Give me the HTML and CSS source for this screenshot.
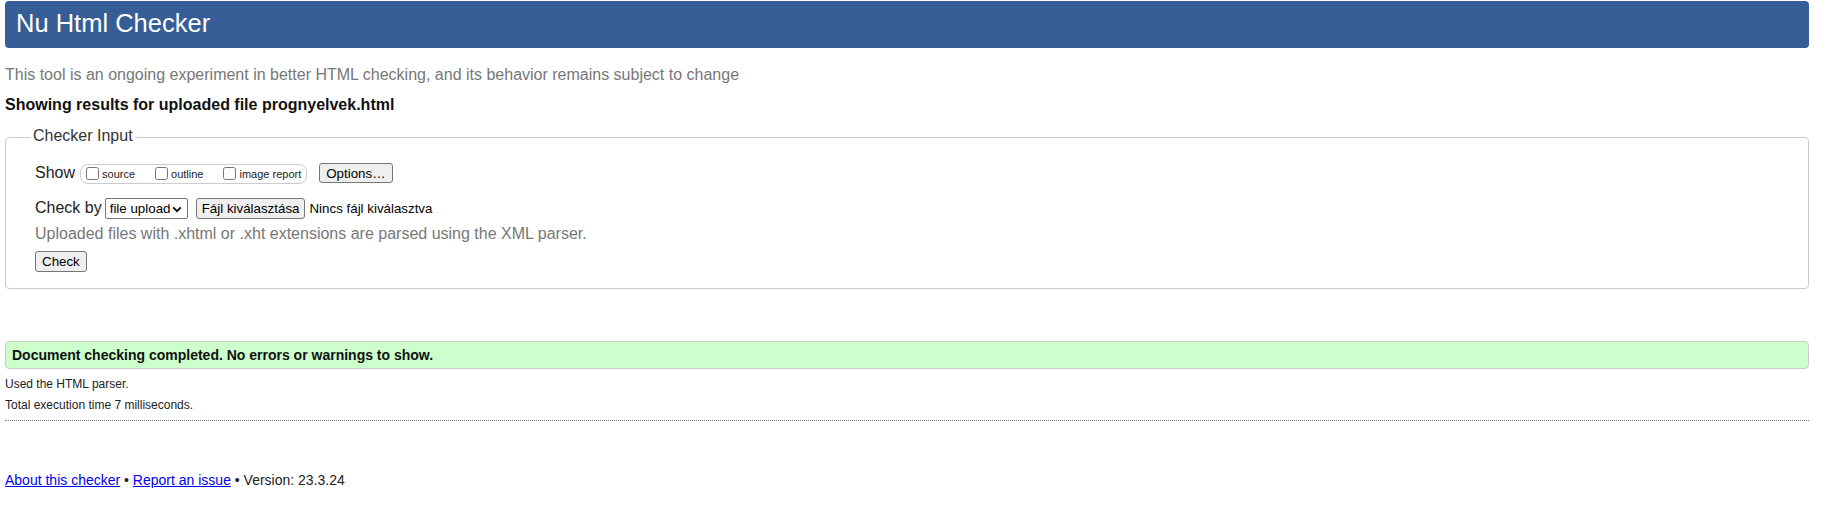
FILE: index.html
```html
<!DOCTYPE html>
<html lang="en">
<head>
<meta charset="utf-8">
<title>Nu Html Checker</title>
<link rel="stylesheet" href="styles.css">
</head>
<body>
<h1 class="title">Nu Html Checker</h1>
<p class="intro">This tool is an ongoing experiment in better HTML checking, and its behavior remains subject to change</p>
<p class="result-for">Showing results for uploaded file prognyelvek.html</p>
<form class="checker">
  <fieldset class="input-box">
    <legend>Checker Input</legend>
    <div class="row row-show">
      <span class="label">Show</span>
      <span class="toggles">
        <label class="toggle"><input type="checkbox">source</label>
        <label class="toggle"><input type="checkbox">outline</label>
        <label class="toggle"><input type="checkbox">image report</label>
      </span>
      <button type="button" class="btn btn-options">Options…</button>
    </div>
    <div class="row row-check">
      <label class="label" for="docselect">Check by</label>
      <span class="select-wrap">
        <select id="docselect" class="select"><option>file upload</option></select>
        <svg class="chevron" width="10" height="7" viewBox="0 0 10 7" aria-hidden="true"><path d="M1.2 1.4 L5 5.2 L8.8 1.4" fill="none" stroke="#000" stroke-width="1.8"/></svg>
      </span>
      <button type="button" class="btn btn-file">Fájl kiválasztása</button>
      <span class="file-status">Nincs fájl kiválasztva</span>
    </div>
    <p class="hint">Uploaded files with .xhtml or .xht extensions are parsed using the XML parser.</p>
    <div class="row row-submit">
      <button type="button" class="btn">Check</button>
    </div>
  </fieldset>
</form>
<div class="success">Document checking completed. No errors or warnings to show.</div>
<p class="details">Used the HTML parser.</p>
<p class="details details-time">Total execution time 7 milliseconds.</p>
<hr class="sep">
<footer class="footer"><a href="#about">About this checker</a> • <a href="#issue">Report an issue</a> • Version: 23.3.24</footer>
</body>
</html>
```

FILE: styles.css
```css
body {
  margin: 0 19px 0 5px;
  font-family: "Liberation Sans", Arial, sans-serif;
  color: #222;
  background: #fff;
}

.title {
  margin: 1px 0 0;
  padding: 7px 11px 10px;
  font-size: 25.5px;
  line-height: 30px;
  font-weight: normal;
  color: #fff;
  background: #365d95;
  border-radius: 4px;
}

.intro {
  margin: 18px 0 0;
  font-size: 16px;
  line-height: 18px;
  color: #777;
}

.result-for {
  margin: 12px 0 0;
  font-size: 16px;
  line-height: 18px;
  font-weight: bold;
  color: #111;
}

.checker {
  margin: 13px 0 0;
}

.input-box {
  margin: 0;
  padding: 15px 0 16px 29px;
  border: 1px solid #ccc;
  border-radius: 4px;
  min-inline-size: 0;
}

.input-box legend {
  margin-left: -4px;
  padding: 0 2px 3px;
  font-size: 16px;
  line-height: 18px;
  color: #333;
}

.row {
  display: flex;
  align-items: baseline;
}

.row-check {
  margin-top: 14px;
}

.row-submit {
  margin-top: 8px;
}

.label {
  font-size: 16px;
  line-height: 18px;
  color: #222;
}

.row-show .label {
  margin-right: 5px;
}

.row-check .label {
  margin-right: 3px;
}

.toggles {
  display: inline-flex;
  align-items: baseline;
  gap: 20px;
  box-sizing: border-box;
  height: 20px;
  padding: 2px 5px 0;
  margin-right: 12px;
  border: 1px solid #ccc;
  border-radius: 8px;
}

.toggle {
  display: inline-block;
  white-space: nowrap;
  font-size: 11px;
  line-height: 13px;
  color: #222;
}

.toggle input {
  width: 13px;
  height: 13px;
  margin: 0 3px 0 0;
  vertical-align: -2px;
}

.btn {
  box-sizing: border-box;
  height: 21px;
  padding: 0 6px;
  font-family: "Liberation Sans", Arial, sans-serif;
  font-size: 13.333px;
  line-height: 15px;
  color: #000;
  background: #efefef;
  border: 1px solid #767676;
  border-radius: 3px;
}

.btn-options {
  height: 20px;
}

.btn-file {
  padding: 0 5px;
  margin-right: 4px;
}

.select-wrap {
  position: relative;
  display: inline-block;
  margin-right: 8px;
}

.select {
  -webkit-appearance: none;
  appearance: none;
  box-sizing: border-box;
  width: 83px;
  height: 21px;
  padding: 0 14px 0 4px;
  font-family: "Liberation Sans", Arial, sans-serif;
  font-size: 13.333px;
  color: #000;
  background: #fff;
  border: 1px solid #767676;
  border-radius: 2px;
}

.chevron {
  position: absolute;
  right: 6px;
  top: 8px;
  pointer-events: none;
}

.file-status {
  font-size: 13.333px;
  line-height: 15px;
  color: #000;
}

.hint {
  margin: 6px 0 0;
  font-size: 16px;
  line-height: 18px;
  color: #777;
}

.success {
  margin: 52px 0 0;
  padding: 5px 6px;
  font-size: 14px;
  line-height: 16px;
  font-weight: bold;
  color: #111;
  background: #ccffcc;
  border: 1px solid #ccc;
  border-radius: 4px;
}

.details {
  margin: 8px 0 0;
  font-size: 12px;
  line-height: 14px;
  color: #222;
}

.details-time {
  margin-top: 7px;
}

.sep {
  margin: 8px 0 0;
  height: 0;
  border: 0;
  border-top: 1px dotted #777;
}

.footer {
  margin-top: 51px;
  font-size: 14px;
  line-height: 16px;
  color: #222;
}

.footer a {
  color: #0000ee;
}
```
